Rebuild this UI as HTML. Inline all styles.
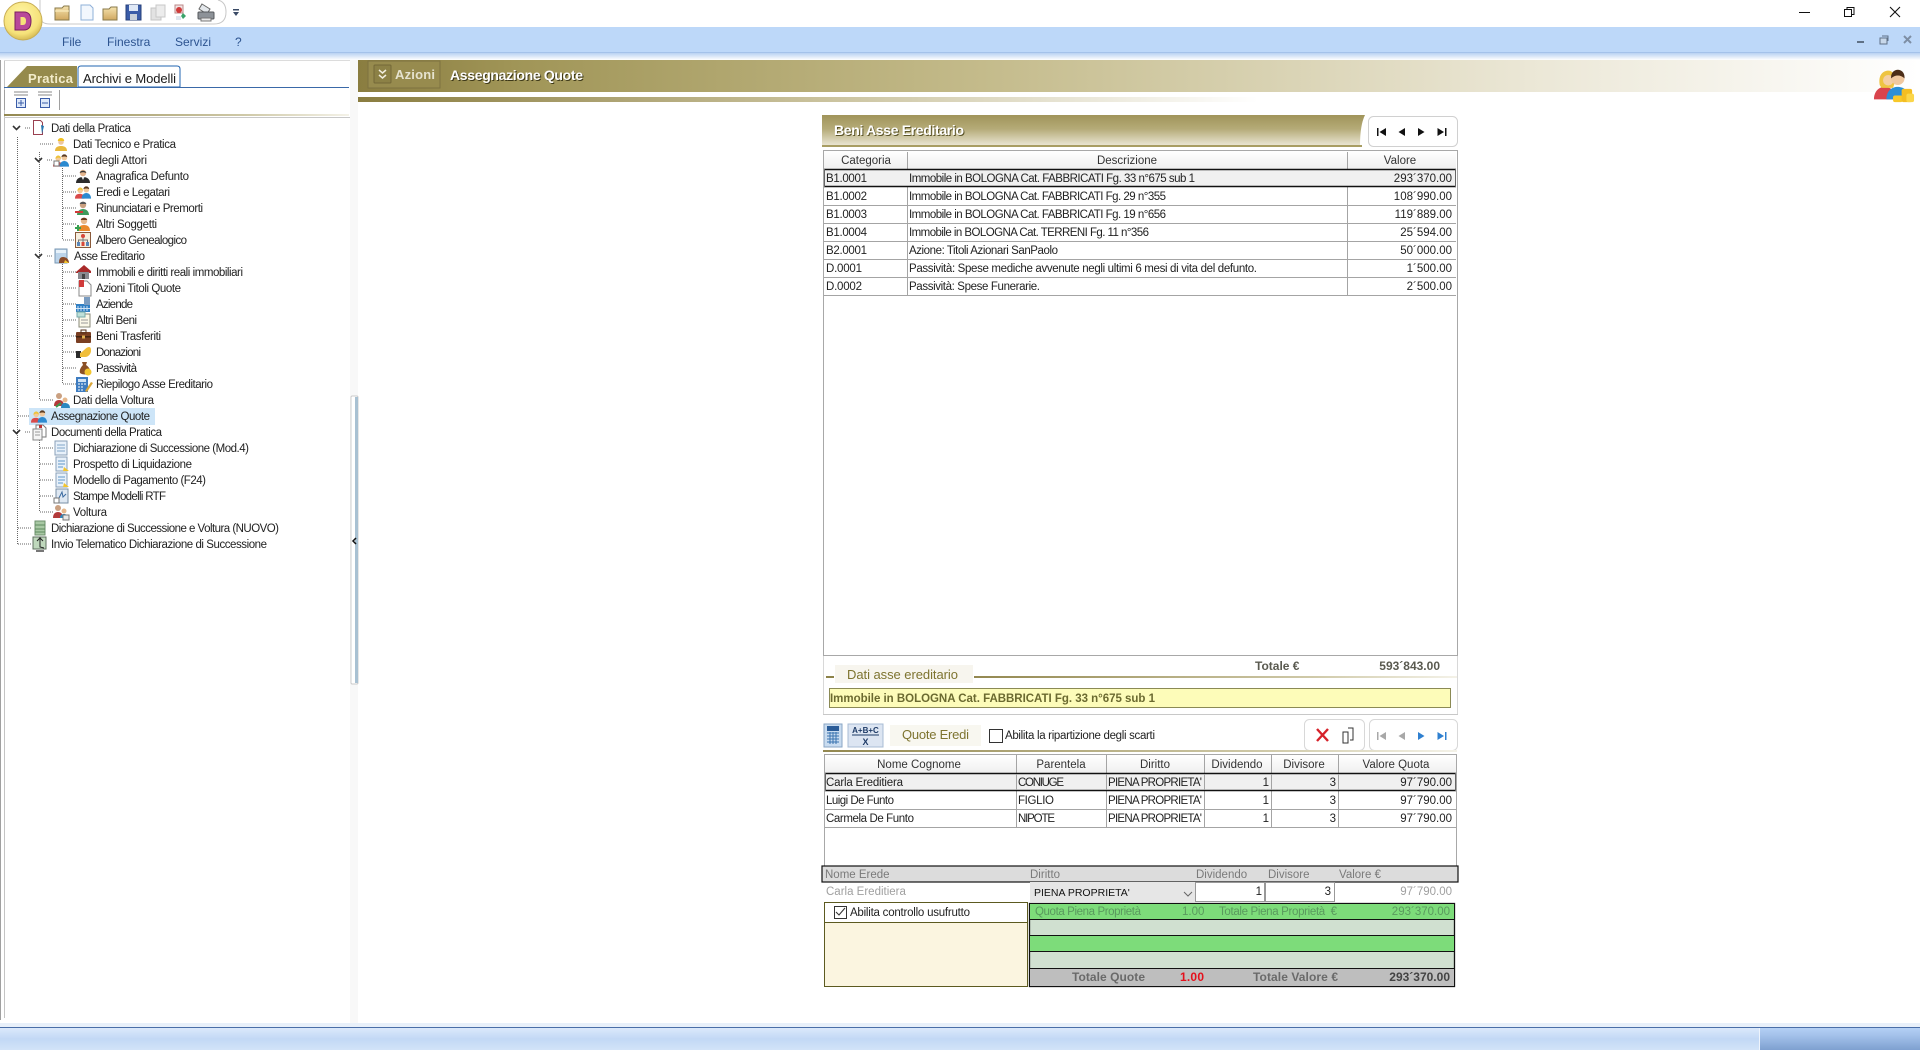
<!DOCTYPE html>
<html lang="it"><head><meta charset="utf-8"><title>Assegnazione Quote</title>
<style>
html,body{margin:0;padding:0;background:#fff;width:1920px;height:1050px;overflow:hidden}
svg{display:block;position:absolute;left:0;top:0}
text{font-family:"Liberation Sans",sans-serif;font-size:11.5px;fill:#222;white-space:pre}
.tr text{fill:#222}
.m{fill:#2d5490;font-size:12px}
.r{text-anchor:end}
.c{text-anchor:middle}
.h{fill:#333}
.g{fill:#7a7a7a}
</style></head><body>
<svg width="1920" height="1050" viewBox="0 0 1920 1050" xmlns="http://www.w3.org/2000/svg">
<defs>
<linearGradient id="band" x1="0" x2="1" y1="0" y2="0"><stop offset="0" stop-color="#8a7d40"/><stop offset=".1" stop-color="#a09557"/><stop offset=".4" stop-color="#c4bb8b"/><stop offset=".75" stop-color="#ebe7d6"/><stop offset="1" stop-color="#fff"/></linearGradient>
<linearGradient id="strip" x1="0" x2="1" y1="0" y2="0"><stop offset="0" stop-color="#8a7d40"/><stop offset=".5" stop-color="#c8c09a"/><stop offset="1" stop-color="#fff"/></linearGradient>
<linearGradient id="hdr" x1="0" x2="0" y1="0" y2="1"><stop offset="0" stop-color="#a0945a"/><stop offset=".45" stop-color="#b5ab78"/><stop offset="1" stop-color="#ece8d6"/></linearGradient>
<linearGradient id="hdrh" x1="0" x2="0" y1="0" y2="1"><stop offset="0" stop-color="#fff"/><stop offset="1" stop-color="#efefef"/></linearGradient>
<linearGradient id="oline" x1="0" x2="1" y1="0" y2="0"><stop offset="0" stop-color="#938850"/><stop offset=".7" stop-color="#cfc9a8"/><stop offset="1" stop-color="#f4f2e8"/></linearGradient>
<linearGradient id="fade" x1="0" x2="0" y1="0" y2="1"><stop offset="0" stop-color="#b9d2f2"/><stop offset="1" stop-color="#fff"/></linearGradient>
<linearGradient id="st" x1="0" x2="0" y1="0" y2="1"><stop offset="0" stop-color="#dbe9fb"/><stop offset=".5" stop-color="#c2d8f5"/><stop offset="1" stop-color="#d2e3f8"/></linearGradient>
<linearGradient id="st2" x1="0" x2="0" y1="0" y2="1"><stop offset="0" stop-color="#b4d0f5"/><stop offset=".35" stop-color="#a3c1ea"/><stop offset="1" stop-color="#7ea0d0"/></linearGradient>
<radialGradient id="logo" cx=".45" cy=".35" r=".7"><stop offset="0" stop-color="#fff6a8"/><stop offset=".7" stop-color="#f6e27a"/><stop offset="1" stop-color="#cdb04a"/></radialGradient>
<linearGradient id="fold" x1="0" x2="0" y1="0" y2="1"><stop offset="0" stop-color="#f5e3ae"/><stop offset="1" stop-color="#d0a860"/></linearGradient>

<symbol id="p1" viewBox="0 0 16 16"><path d="M1 15c0-4 3-6 7-6s7 2 7 6z" fill="#2b2b2b"/><path d="M6.500 9l1.500 3 1.500-3z" fill="#eee"/><circle cx="8" cy="5" r="3.200" fill="#e4b48c"/><path d="M4.800 5c0-3 6.400-3 6.400 0-2-1-4.400-1-6.400 0z" fill="#333"/></symbol>
<symbol id="worker" viewBox="0 0 16 16"><path d="M2 15c0-4 3-5 6-5s6 1 6 5z" fill="#e9b93c"/><circle cx="8" cy="6" r="2.800" fill="#eec79c"/><path d="M4.800 5c0-4 6.400-4 6.400 0z" fill="#f0c020"/></symbol>
<symbol id="team" viewBox="0 0 18 16"><path d="M0 15c0-4 2-5 5-5s5 1 5 5z" fill="#d94a4a"/><circle cx="5.500" cy="6.500" r="2.800" fill="#f3cb9a"/><path d="M2.700 7c-.5-5 6-5 5.600-.5-2-1.500-3.600-1.500-5.600.5z" fill="#eec23c"/><path d="M7 15c0-4 2.500-6 5-6s5 2 5 6z" fill="#2b8ad0"/><circle cx="12" cy="5.500" r="3" fill="#eec79c"/><path d="M9 5c0-4 6-4 6 0-2-1-4-1-6 0z" fill="#5a3a20"/></symbol>
<symbol id="coins" viewBox="0 0 44 36"><path d="M1 33c0-9 6-13 11-13 4 0 8 2 10 5v8z" fill="#d9444c"/><path d="M7 18C5 6 12 3 16 3s8 4 7 12l-2 6H9z" fill="#eec442"/><circle cx="16" cy="13" r="5.500" fill="#f5cfa4"/><path d="M14 33c0-9 6-13 12-13s12 4 12 13z" fill="#2a8fd6"/><circle cx="26" cy="11" r="7" fill="#f0c8a0"/><path d="M19 11c-1-12 15-12 14 0-4-4-10-4-14 0z" fill="#4c2e18"/><rect x="21" y="29" width="10" height="7" rx="2" fill="#f7c82a"/><rect x="30" y="22" width="11" height="14" rx="2" fill="#f4be22"/><rect x="35" y="27" width="8" height="9" rx="2" fill="#fbd64a"/></symbol>
<symbol id="page" viewBox="0 0 16 16"><path d="M3 1h7l3 3v11H3z" fill="#fff" stroke="#7a7f8a"/><path d="M5 6h6M5 9h6M5 12h6" stroke="#9fb4c8"/></symbol>
<symbol id="pageg" viewBox="0 0 16 16"><rect x="2" y="1" width="12" height="14" fill="#e8f1fa" stroke="#8aa0b8"/><path d="M4 5h8M4 8h8M4 11h8" stroke="#7fa5c8"/></symbol>
<symbol id="pagey" viewBox="0 0 16 16"><rect x="2" y="1" width="11" height="14" fill="#e8f1fa" stroke="#8aa0b8"/><path d="M4 5h7M4 8h7M4 11h5" stroke="#5f96c8"/><path d="M10 11l5 4H9z" fill="#f2c52e"/></symbol>
<symbol id="green" viewBox="0 0 16 16"><rect x="3" y="1" width="10" height="14" fill="#a8c8a4" stroke="#6e8f6c"/><path d="M3 5h10M3 9h10M3 12h10" stroke="#5e8a5e"/></symbol>
</defs>

<!-- top -->
<rect x="0" y="27" width="1920" height="25" fill="#bdd8f9"/>
<rect x="0" y="52" width="1920" height="1" fill="#a4c2ea"/>
<rect x="0" y="53" width="1920" height="7" fill="url(#fade)"/>
<path d="M40 0V16Q40 24 50 24H214Q226 24 226 12Q226 2 218 0" fill="#fff" stroke="#c8c8c8"/>
<!-- QAT icons -->
<g>
<path d="M55 8h7l2-2h5v14H55z" fill="url(#fold)" stroke="#8a7a4a"/><path d="M55 11h14" stroke="#fff3c8"/>
<path d="M81 5h9l3 3v12H81z" fill="#f2f7fd" stroke="#8fb0d8"/>
<path d="M103 9h6l2-2h6v13h-14z" fill="url(#fold)" stroke="#8a7a4a"/>
<rect x="126" y="5" width="15" height="15" fill="#3a5ca8" stroke="#27407a"/><rect x="129" y="5" width="9" height="6" fill="#dfe8f6"/><rect x="130" y="14" width="7" height="6" fill="#c8d0da"/>
<rect x="151" y="8" width="10" height="12" fill="#e2e2e2" stroke="#c4c4c4"/><rect x="156" y="5" width="9" height="12" fill="#ececec" stroke="#c8c8c8"/>
<rect x="175" y="5" width="8" height="8" fill="#f2e4e4" stroke="#b88"/><circle cx="179" cy="10" r="3" fill="#d03a3a"/><path d="M183 13l3 3-3 3-2-3z" fill="#3aa36a"/><rect x="176" y="16" width="5" height="4" fill="#dfe6ee"/>
<path d="M202 4l8 5-3 5-8-5z" fill="#e4e8ec" stroke="#666"/><rect x="198" y="12" width="16" height="7" rx="1" fill="#8d9298" stroke="#55585c"/><rect x="201" y="18" width="10" height="3" fill="#e8e8e8" stroke="#777"/>
<path d="M233 9h6v1.500h-6z" fill="#3a4a66"/><path d="M233 12h6l-3 4z" fill="#3a4a66"/>
</g>
<circle cx="23" cy="21" r="19" fill="url(#logo)" stroke="#c7ad55"/>
<path d="M15 12h9q7 0 7 9t-7 9h-9z" fill="#b8489a" stroke="#7c1f60"/><path d="M20.500 17h2.500q3 0 3 4t-3 4h-2.500z" fill="#f6e27a"/>
<text class="m" x="62" y="46">File</text><text class="m" x="107" y="46">Finestra</text><text class="m" x="175" y="46">Servizi</text><text class="m" x="235" y="46">?</text>
<!-- window controls -->
<path d="M1799 12.500h11" stroke="#111" stroke-width="1"/>
<path d="M1844.500 9.500h7v7h-7zM1847 9.500V7.500h7v7h-2.500" fill="none" stroke="#111"/>
<path d="M1890 7l10 10M1900 7l-10 10" stroke="#111" stroke-width="1.100"/>
<path d="M1857 42h7" stroke="#5f7186" stroke-width="2"/>
<path d="M1880 38h7v6h-7z" fill="#c8d8ea" stroke="#5f7186"/><path d="M1882 36h6v5" fill="none" stroke="#5f7186"/>
<path d="M1904 36l7 7M1911 36l-7 7" stroke="#7d8ea4" stroke-width="2"/>

<!-- left panel -->
<rect x="0" y="60" width="1" height="960" fill="#a0a0a0"/>
<rect x="4" y="60" width="1" height="958" fill="#c4c4c4"/>
<rect x="4" y="60" width="346" height="1" fill="#dcdcdc"/>
<path d="M78 87V69q0-3 3-3h96q3 0 3 3v18z" fill="#fff" stroke="#2264b0"/>
<path d="M7 87L27 66h50v21z" fill="#958a4c"/>
<text x="28" y="83" style="font-size:13px;fill:#f3ecca;font-weight:bold" textLength="45">Pratica</text>
<text x="83" y="83" style="font-size:13px;fill:#1a1a1a" textLength="93">Archivi e Modelli</text>
<rect x="4" y="87" width="345" height="1" fill="#3a69a8"/>
<rect x="4" y="90" width="1" height="20" fill="#a0a0a0"/><rect x="59" y="90" width="1" height="20" fill="#a0a0a0"/>
<g fill="none">
<path d="M14 92h14M14 95h14" stroke="#8a8a8a"/><rect x="16.500" y="98.500" width="9" height="9" fill="#dfeafa" stroke="#3a5ca8"/><path d="M21 100v6M18 103h6" stroke="#3a5ca8"/>
<path d="M38 92h14M38 95h14" stroke="#8a8a8a"/><rect x="40.500" y="98.500" width="9" height="9" fill="#dfeafa" stroke="#3a5ca8"/><path d="M42 103h6" stroke="#3a5ca8"/>
</g>
<rect x="4" y="114" width="345" height="2" fill="url(#oline)"/>
<rect x="4" y="117" width="346" height="1" fill="#c8c8c8"/>

<!-- tree lines -->
<g stroke="#666" stroke-dasharray="1 1" fill="none">
<path d="M17.500 137V544M39.500 152V400M62.500 168V240M62.500 264V384M39.500 440V512"/>
<path d="M25 128h5M47 160h5M47 256h5M25 432h5M40 144h13M40 400h13M18 416h13M18 528h13M18 544h13M40 448h13M40 464h13M40 480h13M40 496h13M40 512h13"/>
<path d="M63 176h13M63 192h13M63 208h13M63 224h13M63 240h13M63 272h13M63 288h13M63 304h13M63 320h13M63 336h13M63 352h13M63 368h13M63 384h13"/>
</g>
<g fill="none" stroke="#333" stroke-width="1.600">
<path d="M13 126l3.500 3.500 3.500-3.500M35 158l3.500 3.500 3.500-3.500M35 254l3.500 3.500 3.500-3.500M13 430l3.500 3.500 3.500-3.500"/>
</g>
<rect x="29" y="408" width="126" height="17" fill="#cde5f8"/>
<!-- tree icons -->
<g>
<path d="M33.500 120.500h7l2 2v12h-9z" fill="#fff" stroke="#9a4050"/><path d="M41 125l3 1-2 8z" fill="#2a78b0"/>
<use href="#worker" x="53" y="136" width="16" height="16"/>
<use href="#team" x="53" y="152" width="17" height="16"/><rect x="54" y="161" width="5" height="5" fill="#fff" stroke="#777"/>
<use href="#p1" x="75" y="168" width="16" height="16"/>
<use href="#team" x="75" y="184" width="17" height="16"/>
<g transform="translate(75,200)"><path d="M2 15c0-4 3-6 6-6s6 2 6 6z" fill="#3f9a5c"/><circle cx="8" cy="5" r="3.200" fill="#caa080"/><path d="M4.800 4c0-3 6.400-3 6.400 0z" fill="#555"/><path d="M0 11h8v2H0z" fill="#d03a3a"/></g>
<g transform="translate(75,216)"><path d="M3 15c0-4 2-6 6-6s6 2 6 6z" fill="#ea8a2c"/><circle cx="9" cy="5" r="3.200" fill="#e6b88c"/><path d="M5.800 4c0-3 6.400-3 6.400 0z" fill="#6a3a1c"/><path d="M0 12h6M3 9v6" stroke="#36a050" stroke-width="2"/></g>
<g transform="translate(75,232)"><rect x=".5" y=".5" width="15" height="15" fill="#f6eede" stroke="#8a5a3a"/><circle cx="8" cy="4" r="2" fill="#d8483a"/><rect x="2" y="10" width="3" height="4" fill="#5a86b8"/><rect x="6.500" y="10" width="3" height="4" fill="#d8483a"/><rect x="11" y="10" width="3" height="4" fill="#5a86b8"/><path d="M3.500 10V8h9v2M8 6v4" fill="none" stroke="#777"/></g>
<g transform="translate(54,248)"><rect x="1" y="1" width="12" height="14" fill="#bcd4ea" stroke="#7a97b3"/><path d="M2 2h10v3H2z" fill="#e8f2fa"/><path d="M5 15c0-4 1-6 4-6s6 2 6 6z" fill="#8a4a28"/><path d="M11 12l4 3h-5z" fill="#f2c52e"/></g>
<g transform="translate(76,264)"><path d="M0 8L8 1l7 6v2H0z" fill="#a92a2a"/><rect x="2" y="8" width="11" height="7" fill="#8a8a90"/><rect x="6" y="10" width="3" height="5" fill="#444"/></g>
<g transform="translate(77,280)"><path d="M2 1h8l4 4v11H2z" fill="#fff" stroke="#8a8a8a"/><rect x="2" y="0" width="5" height="7" fill="#d03a3a"/></g>
<g transform="translate(76,296)"><rect x="0" y="8" width="14" height="8" fill="#2f7fc4"/><rect x="8" y="1" width="6" height="8" fill="#7a9cc0"/><path d="M2 10v5M5 10v5M8 10v5M11 10v5M0 12.500h14" stroke="#cfe2f4"/></g>
<g transform="translate(77,312)"><path d="M2 2h11v13H2z" fill="#fbf8e8" stroke="#8a8a7a"/><rect x="0" y="0" width="8" height="5" fill="#bfe0d8" stroke="#7aa" /><path d="M4 8h7M4 11h7" stroke="#999"/></g>
<g transform="translate(76,329)"><rect x="0" y="3" width="15" height="11" rx="1" fill="#7a3f22"/><rect x="5" y="1" width="5" height="3" fill="none" stroke="#55301a"/><rect x="0" y="7" width="15" height="1.500" fill="#40220f"/><rect x="6" y="6.500" width="3" height="3" fill="#e0b050"/></g>
<g transform="translate(76,344)"><rect x="0" y="7" width="5" height="7" fill="#2b2b2b"/><path d="M4 9c3-1 6-6 9-6 2 0 2 2 2 4s-2 6-6 6H4z" fill="#f0be3a"/></g>
<g transform="translate(77,360)"><path d="M5 2h5L9 5c3 2 5 5 4 8-1 2-8 2-10 0C2 10 4 7 6 5z" fill="#8a5026"/><circle cx="11" cy="12" r="3.500" fill="#f2c52e"/></g>
<g transform="translate(76,376)"><rect x="0" y="1" width="12" height="15" fill="#3e7cc0"/><rect x="2" y="3" width="8" height="3" fill="#cfe2f4"/><path d="M2 8h2M5 8h2M8 8h2M2 11h2M5 11h2M2 14h2M5 14h2" stroke="#fff"/><path d="M9 15l6-9 2 1-6 9z" fill="#d9a63a"/></g>
<g transform="translate(54,392)"><circle cx="5" cy="4" r="3" fill="#caa080"/><path d="M0 14c0-4 2-6 5-6s5 2 5 6z" fill="#b33a3a"/><circle cx="11" cy="8" r="2.500" fill="#e6b88c"/><path d="M7 16c0-4 2-5 4-5s5 1 5 5z" fill="#2a88c0"/><path d="M2 15l5-4" stroke="#3a9a50" stroke-width="2"/></g>
<use href="#team" x="31" y="408" width="17" height="16"/>
<g transform="translate(32,424)"><path d="M4 1h7l3 3v9H4z" fill="#fff" stroke="#777"/><rect x="1" y="5" width="9" height="11" fill="#f5f5f5" stroke="#888"/><path d="M3 8h5M3 11h5" stroke="#999"/><path d="M7 1h3v3H7z" fill="#b33"/></g>
<use href="#pageg" x="53" y="440" width="16" height="16"/>
<use href="#pagey" x="54" y="456" width="16" height="16"/>
<use href="#pagey" x="54" y="472" width="16" height="16"/>
<g transform="translate(54,488)"><rect x="2" y="1" width="12" height="14" fill="#dfe8f2" stroke="#7a8fa6"/><path d="M5 10l3-6 1 5 3-3" stroke="#3a6aa0" fill="none"/><rect x="0" y="10" width="5" height="5" fill="#fff" stroke="#777"/></g>
<g transform="translate(53,504)"><circle cx="5" cy="4" r="3" fill="#caa080"/><path d="M0 14c0-4 2-6 5-6s5 2 5 6z" fill="#b33a3a"/><circle cx="11" cy="7" r="2.500" fill="#e6b88c"/><path d="M7 14c0-3 2-4 4-4s4 1 4 4z" fill="#2a88c0"/><rect x="10" y="11" width="6" height="5" fill="#e8e8e8" stroke="#777"/></g>
<use href="#green" x="32" y="520" width="16" height="16"/>
<g transform="translate(32,536)"><rect x="1" y="1" width="13" height="12" fill="#bfd8bc" stroke="#5f6f5f"/><path d="M8 1v10l4 1M5 5l3-3 3 3" stroke="#222" fill="none"/><rect x="4" y="14" width="8" height="2" fill="#777"/></g>
</g>
<!-- tree text -->
<g class="tr">
<text x="51" y="132" textLength="80">Dati della Pratica</text>
<text x="73" y="148" textLength="103">Dati Tecnico e Pratica</text>
<text x="73" y="164" textLength="74">Dati degli Attori</text>
<text x="96" y="180" textLength="93">Anagrafica Defunto</text>
<text x="96" y="196" textLength="74">Eredi e Legatari</text>
<text x="96" y="212" textLength="107">Rinunciatari e Premorti</text>
<text x="96" y="228" textLength="61">Altri Soggetti</text>
<text x="96" y="244" textLength="91">Albero Genealogico</text>
<text x="74" y="260" textLength="71">Asse Ereditario</text>
<text x="96" y="276" textLength="147">Immobili e diritti reali immobiliari</text>
<text x="96" y="292" textLength="85">Azioni Titoli Quote</text>
<text x="96" y="308" textLength="37">Aziende</text>
<text x="96" y="324" textLength="41">Altri Beni</text>
<text x="96" y="340" textLength="65">Beni Trasferiti</text>
<text x="96" y="356" textLength="45">Donazioni</text>
<text x="96" y="372" textLength="41">Passività</text>
<text x="96" y="388" textLength="117">Riepilogo Asse Ereditario</text>
<text x="73" y="404" textLength="81">Dati della Voltura</text>
<text x="51" y="420" textLength="99">Assegnazione Quote</text>
<text x="51" y="436" textLength="111">Documenti della Pratica</text>
<text x="73" y="452" textLength="176">Dichiarazione di Successione (Mod.4)</text>
<text x="73" y="468" textLength="119">Prospetto di Liquidazione</text>
<text x="73" y="484" textLength="133">Modello di Pagamento (F24)</text>
<text x="73" y="500" textLength="93">Stampe Modelli RTF</text>
<text x="73" y="516" textLength="34">Voltura</text>
<text x="51" y="532" textLength="228">Dichiarazione di Successione e Voltura (NUOVO)</text>
<text x="51" y="548" textLength="216">Invio Telematico Dichiarazione di Successione</text>
</g>
<!-- splitter -->
<rect x="350" y="60" width="8" height="965" fill="#f8f8f8"/>
<rect x="351" y="396" width="7" height="288" rx="1" fill="#fff" stroke="#bbb" stroke-width=".7"/>
<rect x="355" y="397" width="3" height="286" fill="#a9c1d2"/>
<path d="M356 538l-3 3 3 3" fill="none" stroke="#111" stroke-width="1.500"/>

<!-- main header -->
<rect x="358" y="60" width="1562" height="32" fill="url(#band)"/>
<rect x="358" y="97" width="900" height="5" fill="url(#strip)"/>
<rect x="368" y="61" width="72" height="27" fill="#978b4e" stroke="#7d7240"/>
<rect x="374" y="65" width="17" height="18" rx="1" fill="#8c8146" stroke="#736838"/>
<path d="M379 70l3.500 3 3.500-3M379 75l3.500 3 3.500-3" fill="none" stroke="#f2efe0" stroke-width="1.500"/>
<text x="395" y="79" style="font-size:13px;fill:#e6e3cf;font-weight:bold" textLength="40">Azioni</text>
<text x="451" y="81" style="font-size:14px;font-weight:bold;fill:#3d3818" textLength="133">Assegnazione Quote</text>
<text x="450" y="80" style="font-size:14px;font-weight:bold;fill:#fff" textLength="133">Assegnazione Quote</text>
<use href="#coins" x="1873" y="67" width="42" height="36"/>

<!-- Beni panel -->
<path d="M822 115H1365Q1360 125 1360 146H822z" fill="url(#hdr)"/>
<rect x="822" y="145" width="540" height="2" fill="#a89d62"/>
<text x="835" y="136" style="font-size:14px;font-weight:bold;fill:#5b5428" textLength="130">Beni Asse Ereditario</text>
<text x="834" y="135" style="font-size:14px;font-weight:bold;fill:#fff" textLength="130">Beni Asse Ereditario</text>
<rect x="1368.500" y="116.500" width="89" height="30" rx="5" fill="#fff" stroke="#d0d0d0"/>
<g fill="#111">
<path d="M1377 128h1.500v8H1377zM1386 128v8l-6.500-4z"/><path d="M1405 128v8l-6.500-4z"/><path d="M1418 128v8l6.500-4z"/><path d="M1445 128h1.500v8H1445zM1437.500 128v8l6.500-4z"/>
</g>
<rect x="823.500" y="150.500" width="634" height="505" fill="#fff" stroke="#a8a8a8"/>
<rect x="824" y="151" width="632" height="18" fill="url(#hdrh)"/>
<g stroke="#a4a4a4" fill="none">
<path d="M907.500 152V295M1347.500 152V295M824 205.500h632M824 223.500h632M824 241.500h632M824 259.500h632M824 277.500h632M824 295.500h632"/>
</g>
<rect x="824" y="169" width="632" height="18" fill="#f0f0f0"/>
<path d="M824 169.500h632M824 186.500h632" stroke="#111" stroke-width="1.600"/>
<path d="M824.500 169v18M1455.500 169v18" stroke="#666"/>
<text class="c h" x="866" y="164">Categoria</text><text class="c h" x="1127" y="164">Descrizione</text><text class="c h" x="1400" y="164">Valore</text>
<g>
<text x="826" y="182" textLength="41">B1.0001</text><text x="909" y="182" textLength="286">Immobile in BOLOGNA Cat. FABBRICATI Fg. 33 n°675 sub 1</text><text class="r" x="1452" y="182">293´370.00</text>
<text x="826" y="200" textLength="41">B1.0002</text><text x="909" y="200" textLength="257">Immobile in BOLOGNA Cat. FABBRICATI Fg. 29 n°355</text><text class="r" x="1452" y="200">108´990.00</text>
<text x="826" y="218" textLength="41">B1.0003</text><text x="909" y="218" textLength="257">Immobile in BOLOGNA Cat. FABBRICATI Fg. 19 n°656</text><text class="r" x="1452" y="218">119´889.00</text>
<text x="826" y="236" textLength="41">B1.0004</text><text x="909" y="236" textLength="240">Immobile in BOLOGNA Cat. TERRENI Fg. 11 n°356</text><text class="r" x="1452" y="236">25´594.00</text>
<text x="826" y="254" textLength="41">B2.0001</text><text x="909" y="254" textLength="149">Azione: Titoli Azionari SanPaolo</text><text class="r" x="1452" y="254">50´000.00</text>
<text x="826" y="272" textLength="36">D.0001</text><text x="909" y="272" textLength="348">Passività: Spese mediche avvenute negli ultimi 6 mesi di vita del defunto.</text><text class="r" x="1452" y="272">1´500.00</text>
<text x="826" y="290" textLength="36">D.0002</text><text x="909" y="290" textLength="131">Passività: Spese Funerarie.</text><text class="r" x="1452" y="290">2´500.00</text>
</g>
<!-- totals -->
<rect x="824" y="656" width="633" height="58" fill="#fff"/>
<rect x="823" y="655" width="635" height="1" fill="#a8a8a8"/>
<rect x="823" y="656" width="1" height="59" fill="#d8d8d8"/><rect x="1457" y="656" width="1" height="59" fill="#d8d8d8"/>
<text x="1255" y="670" style="font-weight:bold;fill:#5a5a50;font-size:12px">Totale €</text>
<text class="r" x="1440" y="670" style="font-weight:bold;fill:#5a5a50;font-size:12px">593´843.00</text>
<rect x="835" y="665" width="138" height="18" fill="#f7f5ee"/>
<rect x="826" y="676" width="8" height="2" fill="#8c8248"/>
<rect x="974" y="676" width="483" height="2" fill="url(#oline)"/>
<text x="847" y="679" style="font-size:13px;fill:#7e7430" textLength="111">Dati asse ereditario</text>
<rect x="829.500" y="688.500" width="621" height="19" fill="#fdfcb9" stroke="#8b8a55"/>
<text x="830" y="702" style="font-weight:bold;fill:#6b6a30;font-size:11.500px" textLength="325">Immobile in BOLOGNA Cat. FABBRICATI Fg. 33 n°675 sub 1</text>
<rect x="823" y="714" width="635" height="1" fill="#c8c8c8"/>
<!-- Quote toolbar -->
<rect x="824" y="724" width="18" height="23" fill="#c9dcf0" stroke="#8aa6c4"/><rect x="827" y="726" width="12" height="5" fill="#2a5c98"/><path d="M827 733h12M827 736h12M827 739h12M827 742h12M830 732v12M833 732v12M836 732v12" stroke="#3a74b0"/>
<rect x="848" y="724" width="35" height="23" fill="#dce5f2" stroke="#a8bcd4"/>
<text class="c" x="865.500" y="733" style="font-size:8px;font-weight:bold;fill:#1d3a66">A+B+C</text>
<path d="M852 735h27" stroke="#1d3a66"/>
<text class="c" x="865.500" y="745" style="font-size:9px;font-weight:bold;fill:#1d3a66">X</text>
<rect x="890" y="725" width="91" height="21" fill="#f8f7f0"/>
<text x="902" y="739" style="font-size:13px;fill:#7e7430" textLength="67">Quote Eredi</text>
<rect x="989.500" y="729.500" width="13" height="13" fill="#fff" stroke="#333"/>
<text x="1005" y="739" textLength="150">Abilita la ripartizione degli scarti</text>
<rect x="1304.500" y="719.500" width="60" height="31" rx="5" fill="#fff" stroke="#d8d8d8"/>
<path d="M1317 729l11 12M1328 729l-11 12" stroke="#d6222a" stroke-width="2.400"/>
<path d="M1348 728h5v12h-3M1343 732h5v11h-5z" fill="#fff" stroke="#333"/><path d="M1344.500 729.500h6" stroke="none"/>
<rect x="1369.500" y="719.500" width="88" height="31" rx="5" fill="#fff" stroke="#d8d8d8"/>
<g fill="#a8a8a8"><path d="M1377 732h1.500v8H1377zM1386 732v8l-6.500-4z"/><path d="M1405 732v8l-6.500-4z"/></g>
<g fill="#2f80d0"><path d="M1418 732v8l6.500-4z"/><path d="M1445 732h1.500v8H1445zM1437.500 732v8l6.500-4z"/></g>
<rect x="823" y="750" width="634" height="2" fill="url(#oline)"/>
<!-- Quote table -->
<rect x="824.500" y="754.500" width="632" height="112" fill="#fff" stroke="#a8a8a8"/>
<rect x="825" y="755" width="631" height="18" fill="url(#hdrh)"/>
<g stroke="#a4a4a4" fill="none"><path d="M1016.500 755V827M1106.500 755V827M1204.500 755V827M1271.500 755V827M1338.500 755V827M825 809.500h631M825 827.500h631"/></g>
<rect x="825" y="773" width="631" height="18" fill="#f0f0f0"/>
<path d="M825 773.500h631M825 790.500h631" stroke="#111" stroke-width="1.600"/>
<path d="M825.500 773v18M1455.500 773v18" stroke="#666"/>
<path d="M1016.500 774V790M1106.500 774V790M1204.500 774V790M1271.500 774V790M1338.500 774V790" stroke="#a4a4a4"/>
<g class="h">
<text class="c h" x="919" y="768">Nome Cognome</text><text class="c h" x="1061" y="768">Parentela</text><text class="c h" x="1155" y="768">Diritto</text><text class="c h" x="1237" y="768">Dividendo</text><text class="c h" x="1304" y="768">Divisore</text><text class="c h" x="1396" y="768">Valore Quota</text>
</g>
<g>
<text x="826" y="786" textLength="77">Carla Ereditiera</text><text x="1018" y="786" textLength="46">CONIUGE</text><text x="1108" y="786" textLength="94">PIENA PROPRIETA'</text><text class="r" x="1269" y="786">1</text><text class="r" x="1336" y="786">3</text><text class="r" x="1452" y="786">97´790.00</text>
<text x="826" y="804" textLength="68">Luigi De Funto</text><text x="1018" y="804" textLength="36">FIGLIO</text><text x="1108" y="804" textLength="94">PIENA PROPRIETA'</text><text class="r" x="1269" y="804">1</text><text class="r" x="1336" y="804">3</text><text class="r" x="1452" y="804">97´790.00</text>
<text x="826" y="822" textLength="88">Carmela De Funto</text><text x="1018" y="822" textLength="37">NIPOTE</text><text x="1108" y="822" textLength="94">PIENA PROPRIETA'</text><text class="r" x="1269" y="822">1</text><text class="r" x="1336" y="822">3</text><text class="r" x="1452" y="822">97´790.00</text>
</g>
<!-- form -->
<rect x="822" y="866" width="636" height="16" fill="#dcdcdc" stroke="#111" stroke-width="1.200"/>
<g><text class="g" x="825" y="878">Nome Erede</text><text class="g" x="1030" y="878">Diritto</text><text class="g" x="1196" y="878">Dividendo</text><text class="g" x="1268" y="878">Divisore</text><text class="g" x="1339" y="878">Valore €</text></g>
<text x="826" y="895" style="fill:#a0a0a0">Carla Ereditiera</text>
<rect x="1030" y="882" width="165" height="20" fill="#e6e6e6"/>
<text x="1034" y="896" style="font-size:10.500px;fill:#111">PIENA PROPRIETA'</text>
<path d="M1184 892l4 4 4-4" fill="none" stroke="#666"/>
<rect x="1195.500" y="882.500" width="69" height="19" fill="#fff" stroke="#999"/>
<rect x="1265.500" y="882.500" width="69" height="19" fill="#fff" stroke="#999"/>
<text class="r" x="1262" y="895">1</text><text class="r" x="1331" y="895">3</text>
<text class="r" x="1452" y="895" style="fill:#a0a0a0">97´790.00</text>
<rect x="824.500" y="902.500" width="203" height="84" fill="#fbf5e0" stroke="#5c5a20"/>
<rect x="825" y="903" width="202" height="19" fill="#fff"/><rect x="825" y="922" width="202" height="1" fill="#5c5a20"/>
<rect x="834.500" y="906.500" width="12" height="12" fill="#fff" stroke="#333"/>
<path d="M836 912l3 3 6-7" fill="none" stroke="#333" stroke-width="1.100"/>
<text x="850" y="916" textLength="120">Abilita controllo usufrutto</text>
<rect x="1029.500" y="903.500" width="425" height="83" fill="#d0e0d0" stroke="#111" stroke-width="1.300"/>
<rect x="1030" y="904" width="424" height="15" fill="#7ddc7a"/>
<rect x="1030" y="936" width="424" height="15" fill="#7ddc7a"/>
<rect x="1030" y="969" width="424" height="17" fill="#bebebe"/>
<g stroke="#111" stroke-width="1"><path d="M1030 919.500h424M1030 935.500h424M1030 951.500h424M1030 968.500h424"/></g>
<g><text x="1035" y="915" style="fill:#5a9a5e" textLength="106">Quota Piena Proprietà</text><text x="1182" y="915" style="fill:#5a9a5e">1.00</text><text x="1219" y="915" style="fill:#5a9a5e" textLength="118">Totale Piena Proprietà  €</text><text class="r" x="1450" y="915" style="fill:#5a9a5e">293´370.00</text></g>
<text x="1072" y="981" style="font-weight:bold;font-size:12px;fill:#6a6a6a" textLength="73">Totale Quote</text>
<text x="1180" y="981" style="font-weight:bold;font-size:12px;fill:#e4101c" textLength="24">1.00</text>
<text x="1253" y="981" style="font-weight:bold;font-size:12px;fill:#6a6a6a" textLength="85">Totale Valore €</text>
<text class="r" x="1450" y="981" style="font-weight:bold;font-size:12px;fill:#444">293´370.00</text>

<!-- status bar -->
<rect x="0" y="1023" width="1920" height="4" fill="#e8f0fa"/>
<rect x="0" y="1027" width="1920" height="1" fill="#4a6ea8"/>
<rect x="0" y="1028" width="1760" height="22" fill="url(#st)"/>
<rect x="1760" y="1028" width="160" height="22" fill="url(#st2)"/>
<rect x="1759" y="1028" width="1" height="22" fill="#eef4fc"/>
</svg>
</body></html>
